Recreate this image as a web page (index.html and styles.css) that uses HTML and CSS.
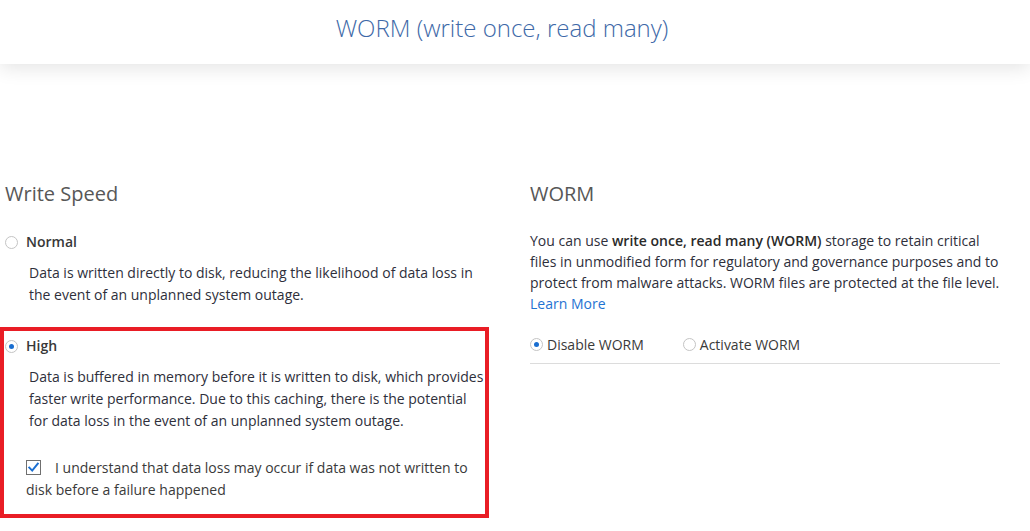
FILE: index.html
```html
<!DOCTYPE html>
<html lang="en">
<head>
<meta charset="utf-8">
<title>WORM (write once, read many)</title>
<link rel="stylesheet" href="styles.css">
</head>
<body>
<header class="topbar">
  <h1 class="title">WORM (write once, read many)</h1>
</header>
<main class="content">
  <section class="col col-left">
    <h2 class="section-title">Write Speed</h2>
    <div class="option">
      <div class="option-row">
        <span class="radio"></span>
        <span class="option-label">Normal</span>
      </div>
      <p class="option-desc">Data is written directly to disk, reducing the likelihood of data loss in the event of an unplanned system outage.</p>
    </div>
    <div class="option option-highlight">
      <div class="option-row">
        <span class="radio radio-checked"></span>
        <span class="option-label">High</span>
      </div>
      <p class="option-desc">Data is buffered in memory before it is written to disk, which provides faster write performance. Due to this caching, there is the potential for data loss in the event of an unplanned system outage.</p>
      <p class="ack"><span class="checkbox"><svg viewBox="0 0 15 15" width="15" height="15"><path d="M3.3 7.6 L6.2 10.6 L11.8 3.6" fill="none" stroke="#1b6fd1" stroke-width="2" stroke-linecap="square"/></svg></span>I understand that data loss may occur if data was not written to disk before a failure happened</p>
    </div>
  </section>
  <section class="col col-right">
    <h2 class="section-title">WORM</h2>
    <p class="worm-text">You can use <strong>write once, read many (WORM)</strong> storage to retain critical files in unmodified form for regulatory and governance purposes and to protect from malware attacks. WORM files are protected at the file level. <a class="link" href="#">Learn More</a></p>
    <div class="worm-options">
      <label class="worm-option"><span class="radio radio-checked"></span>Disable WORM</label>
      <label class="worm-option"><span class="radio"></span>Activate WORM</label>
    </div>
  </section>
</main>
</body>
</html>
```

FILE: styles.css
```css
html, body {
  margin: 0;
  padding: 0;
  background: #ffffff;
}

body {
  font-family: "Open Sans", "Noto Sans", "Liberation Sans", sans-serif;
  font-size: 14px;
  color: #2e2f3b;
}

.topbar {
  position: relative;
  z-index: 1;
  height: 64px;
  background: #ffffff;
  box-shadow: 0 4px 18px rgba(0, 0, 0, 0.11);
  display: flex;
  align-items: center;
  justify-content: center;
  box-sizing: border-box;
  padding: 0 26px 9px 0;
}

.title {
  margin: 0;
  font-size: 24px;
  font-weight: 300;
  line-height: 33px;
  color: #3e69a8;
}

.content {
  display: grid;
  grid-template-columns: 489px 470px;
  column-gap: 41px;
  padding: 116px 0 0 0;
  align-items: start;
}

.section-title {
  margin: 0 0 22px 0;
  font-size: 20px;
  font-weight: 400;
  line-height: 28px;
  color: #575757;
}

.col-left .section-title {
  padding-left: 5px;
  margin-bottom: 19px;
}

.option {
  border: 4px solid transparent;
  padding: 0 0 0 1px;
}

.option + .option {
  margin-top: 17px;
}

.option-highlight {
  border-color: #e91d25;
  padding-top: 4px;
  padding-bottom: 13px;
}

.option-row {
  display: flex;
  align-items: center;
  gap: 8px;
  line-height: 22px;
}

.option-label {
  font-weight: 600;
  color: #383838;
}

.radio {
  display: inline-block;
  box-sizing: border-box;
  width: 13px;
  height: 13px;
  border: 1px solid #c4c4c4;
  border-radius: 50%;
  background: #ffffff;
  flex: none;
  position: relative;
}

.radio-checked::after {
  content: "";
  position: absolute;
  left: 3px;
  top: 3px;
  width: 5px;
  height: 5px;
  border-radius: 50%;
  background: #1a6ed0;
}

.option-desc {
  margin: 9px 0 0 24px;
  line-height: 22px;
}

.ack {
  margin: 25px 0 0 21px;
  line-height: 22px;
  color: #3a3a3a;
}

.checkbox {
  display: inline-block;
  box-sizing: border-box;
  width: 15px;
  height: 15px;
  border: 1px solid #6f6f6f;
  vertical-align: -2px;
  margin-right: 14px;
  background: #ffffff;
}

.checkbox svg {
  display: block;
  margin: -1px 0 0 -1px;
}

.worm-text {
  margin: 0;
  line-height: 21px;
}

.worm-text strong {
  font-weight: 600;
  color: #2a2a2a;
}

.link {
  color: #1f73d2;
  text-decoration: none;
}

.worm-options {
  display: flex;
  gap: 39px;
  margin-top: 20px;
  padding-bottom: 8px;
  border-bottom: 1px solid #dcdcdc;
  line-height: 21px;
}

.worm-option {
  display: flex;
  align-items: center;
  gap: 4px;
  color: #3a3a3a;
}
```
